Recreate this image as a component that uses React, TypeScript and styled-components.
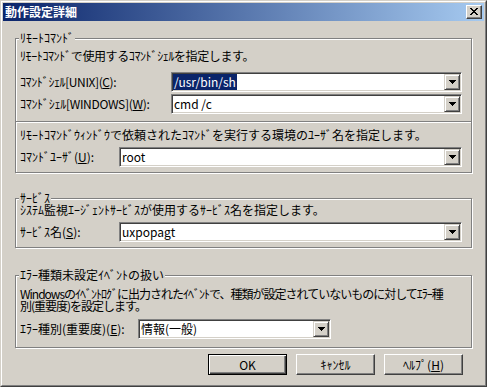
import React from "react";
import styled, { createGlobalStyle, css } from "styled-components";

const GlobalStyle = createGlobalStyle`
  html, body {
    margin: 0;
    padding: 0;
    background: #d4d0c8;
  }
  body {
    font-family: "Noto Sans CJK JP", "Noto Sans", sans-serif;
    font-size: 12px;
    color: #000;
  }
`;

const Window = styled.div`
  width: 487px;
  height: 387px;
  box-sizing: border-box;
  border: 1px solid;
  border-color: #d4d0c8 #404040 #404040 #d4d0c8;
  background: #d4d0c8;
`;

const Frame = styled.div`
  height: 100%;
  box-sizing: border-box;
  border: 1px solid;
  border-color: #fff #808080 #808080 #fff;
  padding: 1px;
  display: flex;
  flex-direction: column;
`;

const TitleBar = styled.div`
  height: 18px;
  flex: none;
  display: flex;
  align-items: center;
  justify-content: space-between;
  padding: 0 2px;
  background: linear-gradient(to right, #0a246a, #a6caf0);
`;

const Title = styled.span`
  color: #fff;
  font-weight: bold;
  line-height: 12px;
`;

const CloseButton = styled.div`
  width: 16px;
  height: 14px;
  box-sizing: border-box;
  border: 1px solid;
  border-color: #fff #404040 #404040 #fff;
  box-shadow: inset -1px -1px #808080;
  background: #d4d0c8;
  display: flex;
  align-items: center;
  justify-content: center;
  padding: 0 1px 1px 0;
`;

const Body = styled.div`
  flex: 1;
  display: flex;
  flex-direction: column;
  padding: 17px 12px 0;
`;

const Group = styled.div<{ $top: number }>`
  position: relative;
  margin-top: ${(p) => p.$top}px;
  border: 1px solid #808080;
  box-shadow: inset 1px 1px #fff, 1px 1px #fff;
`;

const Caption = styled.span`
  position: absolute;
  top: -7px;
  left: 3px;
  padding: 0 1px;
  line-height: 12px;
  background: #d4d0c8;
  white-space: nowrap;
`;

const Section = styled.div<{ $pt: number; $pb: number }>`
  display: flex;
  flex-direction: column;
  padding: ${(p) => p.$pt}px 8px ${(p) => p.$pb}px 4px;

  & + & {
    border-top: 1px solid #808080;
    box-shadow: inset 0 1px #fff;
  }
`;

const Note = styled.div<{ $tight?: number }>`
  line-height: 12px;
  white-space: nowrap;
  letter-spacing: ${(p) => p.$tight ?? 0}px;
`;

const Row = styled.div<{ $mt: number }>`
  display: flex;
  align-items: center;
  margin-top: ${(p) => p.$mt}px;
`;

const Label = styled.span<{ $w: number; $tight?: number }>`
  width: ${(p) => p.$w}px;
  flex: none;
  line-height: 12px;
  white-space: nowrap;
  letter-spacing: ${(p) => p.$tight ?? 0}px;
`;

const Combo = styled.div<{ $w: number }>`
  width: ${(p) => p.$w}px;
  height: 20px;
  box-sizing: border-box;
  border: 1px solid;
  border-color: #808080 #fff #fff #808080;
  box-shadow: inset 1px 1px #404040, inset -1px -1px #d4d0c8;
  background: #fff;
  padding: 1px;
  display: flex;
`;

const ComboText = styled.div`
  flex: 1;
  display: flex;
  align-items: stretch;
  overflow: hidden;
`;

const Value = styled.span<{ $selected?: boolean }>`
  display: flex;
  align-items: center;
  padding: 0 1px;
  line-height: 12px;
  white-space: nowrap;
  ${(p) =>
    p.$selected &&
    css`
      background: #0a246a;
      color: #fff;
    `}
`;

const DropButton = styled.div`
  width: 16px;
  flex: none;
  box-sizing: border-box;
  border: 1px solid;
  border-color: #d4d0c8 #404040 #404040 #d4d0c8;
  box-shadow: inset 1px 1px #fff, inset -1px -1px #808080;
  background: #d4d0c8;
  display: flex;
  align-items: center;
  justify-content: center;
`;

const ButtonBar = styled.div`
  display: flex;
  justify-content: flex-end;
  gap: 9px;
  margin-top: 6px;
  padding-right: 9px;
`;

const Button = styled.button<{ $default?: boolean }>`
  width: 79px;
  height: 21px;
  padding: 0;
  font: inherit;
  line-height: 12px;
  color: #000;
  background: #d4d0c8;
  border: 1px solid;
  border-color: #fff #404040 #404040 #fff;
  box-shadow: inset -1px -1px #808080;
  ${(p) =>
    p.$default &&
    css`
      border-color: #000;
      box-shadow: inset 1px 1px #fff, inset -1px -1px #404040,
        inset -2px -2px #808080;
    `}
`;

const Key = styled.u`
  text-decoration: underline;
  text-underline-offset: 1px;
`;

const CloseGlyph = () => (
  <svg width="8" height="7" viewBox="0 0 8 7" shapeRendering="crispEdges">
    <path
      d="M0 0h2v1h-2zM6 0h2v1h-2zM1 1h2v1h-2zM5 1h2v1h-2zM2 2h4v1h-4zM3 3h2v1h-2zM2 4h4v1h-4zM1 5h2v1h-2zM5 5h2v1h-2zM0 6h2v1h-2zM6 6h2v1h-2z"
      fill="#000"
    />
  </svg>
);

const Arrow = () => (
  <svg width="7" height="4" viewBox="0 0 7 4" shapeRendering="crispEdges">
    <path d="M0 0h7v1h-1v1h-1v1h-1v1h-1v-1h-1v-1h-1v-1h-1z" fill="#000" />
  </svg>
);

const Select: React.FC<{ width: number; value: string; selected?: boolean }> = ({
  width,
  value,
  selected,
}) => (
  <Combo $w={width}>
    <ComboText>
      <Value $selected={selected}>{value}</Value>
    </ComboText>
    <DropButton>
      <Arrow />
    </DropButton>
  </Combo>
);

const App: React.FC = () => {
  return (
    <>
      <GlobalStyle />
      <Window>
        <Frame>
          <TitleBar>
            <Title>動作設定詳細</Title>
            <CloseButton>
              <CloseGlyph />
            </CloseButton>
          </TitleBar>

          <Body>
            <Group $top={0}>
              <Caption>ﾘﾓｰﾄｺﾏﾝﾄﾞ</Caption>
              <Section $pt={11} $pb={7}>
                <Note $tight={-0.4}>ﾘﾓｰﾄｺﾏﾝﾄﾞで使用するｺﾏﾝﾄﾞｼｪﾙを指定します。</Note>
                <Row $mt={10}>
                  <Label $w={151} $tight={-0.4}>
                    ｺﾏﾝﾄﾞｼｪﾙ[UNIX](<Key>C</Key>):
                  </Label>
                  <Select width={291} value="/usr/bin/sh" selected />
                </Row>
                <Row $mt={2}>
                  <Label $w={151} $tight={-0.3}>
                    ｺﾏﾝﾄﾞｼｪﾙ[WINDOWS](<Key>W</Key>):
                  </Label>
                  <Select width={291} value="cmd /c" />
                </Row>
              </Section>
              <Section $pt={7} $pb={5}>
                <Note>
                  ﾘﾓｰﾄｺﾏﾝﾄﾞｳｨﾝﾄﾞｳで依頼されたｺﾏﾝﾄﾞを実行する環境のﾕｰｻﾞ名を指定します。
                </Note>
                <Row $mt={6}>
                  <Label $w={99}>
                    ｺﾏﾝﾄﾞﾕｰｻﾞ(<Key>U</Key>):
                  </Label>
                  <Select width={343} value="root" />
                </Row>
              </Section>
            </Group>

            <Group $top={25}>
              <Caption>ｻｰﾋﾞｽ</Caption>
              <Section $pt={5} $pb={5}>
                <Note>ｼｽﾃﾑ監視ｴｰｼﾞｪﾝﾄｻｰﾋﾞｽが使用するｻｰﾋﾞｽ名を指定します。</Note>
                <Row $mt={6}>
                  <Label $w={99}>
                    ｻｰﾋﾞｽ名(<Key>S</Key>):
                  </Label>
                  <Select width={343} value="uxpopagt" />
                </Row>
              </Section>
            </Group>

            <Group $top={27}>
              <Caption>ｴﾗｰ種類未設定ｲﾍﾞﾝﾄの扱い</Caption>
              <Section $pt={12} $pb={8}>
                <Note $tight={-1}>
                  Windowsのｲﾍﾞﾝﾄﾛｸﾞに出力されたｲﾍﾞﾝﾄで、種類が設定されていないものに対してｴﾗｰ種
                  <br />
                  別(重要度)を設定します。
                </Note>
                <Row $mt={7}>
                  <Label $w={118}>
                    ｴﾗｰ種別(重要度)(<Key>E</Key>):
                  </Label>
                  <Select width={193} value="情報(一般)" />
                </Row>
              </Section>
            </Group>

            <ButtonBar>
              <Button $default>OK</Button>
              <Button>ｷｬﾝｾﾙ</Button>
              <Button>
                ﾍﾙﾌﾟ(<Key>H</Key>)
              </Button>
            </ButtonBar>
          </Body>
        </Frame>
      </Window>
    </>
  );
};

export default App;
